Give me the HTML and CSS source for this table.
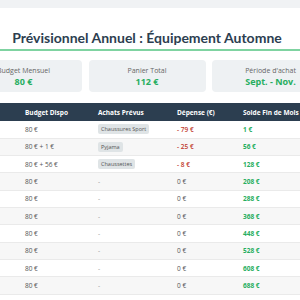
FILE: index.html
```html
<!DOCTYPE html>
<html lang="fr">
<head>
<meta charset="utf-8">
<title>Prévisionnel Annuel</title>
<link rel="stylesheet" href="styles.css">
</head>
<body>
<div class="page">
  <h1 class="title">Prévisionnel Annuel : Équipement Automne</h1>
  <div class="cards">
    <div class="card"><div class="card-label">Budget Mensuel</div><div class="card-value">80 €</div></div>
    <div class="card"><div class="card-label">Panier Total</div><div class="card-value">112 €</div></div>
    <div class="card"><div class="card-label">Période d'achat</div><div class="card-value">Sept. - Nov.</div></div>
  </div>
  <table class="plan">
    <thead>
      <tr>
        <th class="c-month">Mois</th>
        <th class="c-budget">Budget Dispo</th>
        <th class="c-items">Achats Prévus</th>
        <th class="c-spend">Dépense (€)</th>
        <th class="c-balance">Solde Fin de Mois</th>
      </tr>
    </thead>
    <tbody>
      <tr><td>Sept</td><td>80 €</td><td><span class="chip">Chaussures Sport</span></td><td class="neg">- 79 €</td><td class="pos">1 €</td></tr>
      <tr><td>Oct</td><td>80 € + 1 €</td><td><span class="chip">Pyjama</span></td><td class="neg">- 25 €</td><td class="pos">56 €</td></tr>
      <tr><td>Nov</td><td>80 € + 56 €</td><td><span class="chip">Chaussettes</span></td><td class="neg">- 8 €</td><td class="pos">128 €</td></tr>
      <tr><td>Déc</td><td>80 €</td><td class="dash">-</td><td>0 €</td><td class="pos">208 €</td></tr>
      <tr><td>Jan</td><td>80 €</td><td class="dash">-</td><td>0 €</td><td class="pos">288 €</td></tr>
      <tr><td>Fév</td><td>80 €</td><td class="dash">-</td><td>0 €</td><td class="pos">368 €</td></tr>
      <tr><td>Mars</td><td>80 €</td><td class="dash">-</td><td>0 €</td><td class="pos">448 €</td></tr>
      <tr><td>Avr</td><td>80 €</td><td class="dash">-</td><td>0 €</td><td class="pos">528 €</td></tr>
      <tr><td>Mai</td><td>80 €</td><td class="dash">-</td><td>0 €</td><td class="pos">608 €</td></tr>
      <tr><td>Juin</td><td>80 €</td><td class="dash">-</td><td>0 €</td><td class="pos">688 €</td></tr>
    </tbody>
  </table>
</div>
</body>
</html>
```
FILE: styles.css
```css
html, body {
  margin: 0;
  padding: 0;
  background: #f0f2f4;
  overflow: hidden;
}
body {
  font-family: "Open Sans", "DejaVu Sans", sans-serif;
  color: #555;
}
.page {
  margin: 8px 0 0 -35px;
  width: 364px;
  background: #fff;
  padding: 20px 0 40px;
}
.title {
  margin: 0;
  font-family: "Lato", "Open Sans", sans-serif;
  font-size: 14px;
  line-height: 20px;
  font-weight: 700;
  color: #2c3e50;
  text-align: center;
  padding-bottom: 1px;
  border-bottom: 2px solid #7fd3a1;
}
.cards {
  margin-top: 9px;
  display: grid;
  grid-template-columns: repeat(3, 1fr);
  gap: 6.5px;
}
.card {
  background: #eef1f3;
  border-radius: 4px;
  height: 32px;
  padding-top: 6px;
  box-sizing: border-box;
  text-align: center;
}
.card-label {
  font-size: 7px;
  line-height: 10px;
  color: #666;
}
.card-value {
  font-size: 9px;
  line-height: 11px;
  font-weight: 700;
  color: #27ae60;
}
.plan {
  margin-top: 11px;
  width: 364px;
  border-collapse: collapse;
  table-layout: fixed;
  font-size: 6.5px;
}
.plan th {
  box-sizing: border-box;
  background: #2c3e50;
  color: #fff;
  font-weight: 700;
  text-align: left;
  height: 18px;
  padding: 0 8px;
}
.c-month { width: 52px; }
.c-budget { width: 73px; }
.c-items { width: 79px; }
.c-spend { width: 66px; }
.c-balance { width: 94px; }
.plan td {
  height: 17.33px;
  padding: 0 8px;
  border-bottom: 1px solid #eaeaea;
  box-sizing: border-box;
  white-space: nowrap;
}
.plan tbody tr:nth-child(even) td {
  background: #f7f7f7;
}
.neg { color: #c0392b; font-weight: 600; }
.pos { color: #27ae60; font-weight: 700; }
.dash { color: #999; }
.chip {
  display: inline-block;
  background: #dfe4e6;
  color: #555;
  font-size: 5.5px;
  line-height: 10px;
  padding: 0 3px;
  border-radius: 2px;
}
```
